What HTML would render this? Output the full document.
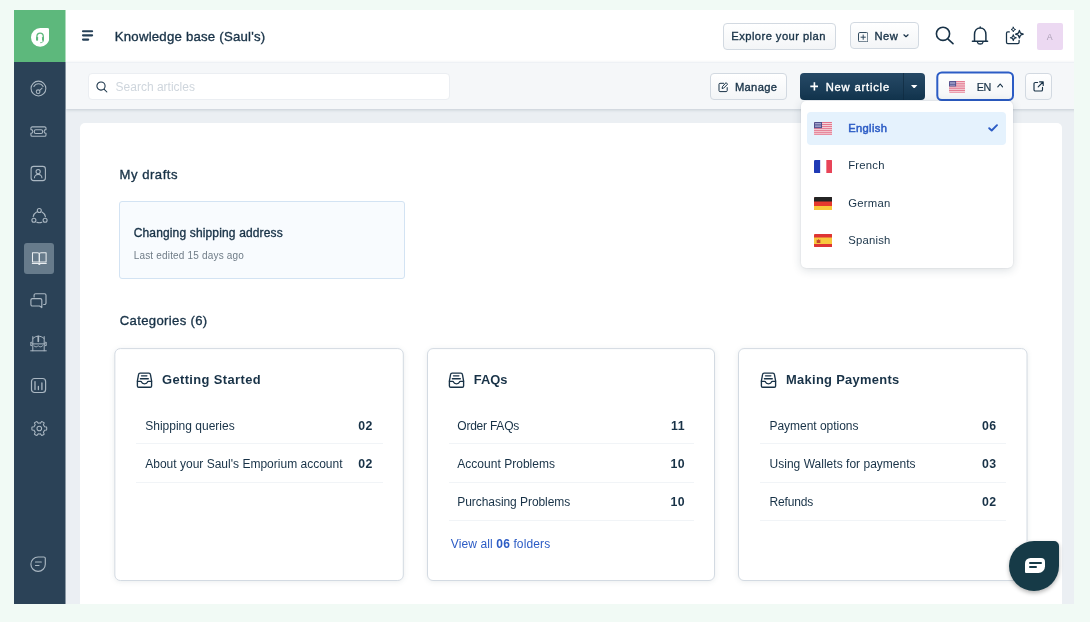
<!DOCTYPE html>
<html lang="en">
<head>
<meta charset="utf-8">
<title>Knowledge base (Saul's)</title>
<style>
*{box-sizing:border-box;margin:0;padding:0}
html,body{width:1090px;height:622px;overflow:hidden;background:#f1faf5}
body{font-family:"Liberation Sans",sans-serif;color:#183247;position:relative}
.app{position:absolute;left:14px;top:10px;width:1060px;height:594px;overflow:hidden;background:#ebeff3}
.in{position:absolute;left:-14px;top:-10px;width:1090px;height:622px;will-change:transform}
.abs{position:absolute}
.t{position:absolute;white-space:nowrap;line-height:1}
.m{-webkit-text-stroke:.35px currentColor}
.m2{-webkit-text-stroke:.5px currentColor}
/* sidebar */
.side{position:absolute;left:6px;top:2px;width:60px;height:612px;background:linear-gradient(to right,#2b4257 59px,rgba(43,66,87,.5) 59px)}
.logo{position:absolute;left:6px;top:2px;width:60px;height:60px;background:linear-gradient(to right,#5db87c 59px,#aedcbd 59px)}
.sic{position:absolute;left:30px;width:17px;height:17px}
.sic svg{display:block;width:17px;height:17px;overflow:visible}
.active{position:absolute;left:24px;top:243px;width:30px;height:31px;border-radius:3px;background:#677b8b}
/* header */
.header{position:absolute;left:65.5px;top:2px;width:1018.500px;height:60.200px;background:#fff}
.toolbar{position:absolute;left:65.5px;top:62.200px;width:1018.500px;height:46.800px;background:#f5f7f9;border-top:1px solid #eef1f5;box-shadow:0 1px 3px rgba(24,50,71,.18)}
.btn{position:absolute;border:1px solid #d2d9e1;border-radius:4px;background:linear-gradient(#fff,#f3f5f7)}
.panel{position:absolute;left:80px;top:123px;width:982px;height:520px;background:#fff;border-radius:5px}
.card{position:absolute;top:348px;height:232.5px;width:289px;border:1px solid #cfd7df;border-radius:7px;background:#fff;box-shadow:0 1px 2px rgba(24,50,71,.06)}
.sep{position:absolute;height:1px;background:#f1f4f7}
.row{font-size:12px;color:#183247}
.num{font-size:12.3px;font-weight:bold;color:#183247}
.ct{font-size:12.9px;font-weight:bold;color:#183247}
</style>
</head>
<body>
<div class="app"><div class="in">
<svg width="0" height="0" style="position:absolute"><defs>
<g id="us"><clipPath id="fc"><rect width="18" height="13" rx="1.3"/></clipPath><g clip-path="url(#fc)"><rect width="18" height="13" fill="#f5d9df"/><g fill="#e3728a"><rect y="0" width="18" height="1"/><rect y="2" width="18" height="1"/><rect y="4" width="18" height="1"/><rect y="6" width="18" height="1"/><rect y="8" width="18" height="1"/><rect y="10" width="18" height="1"/><rect y="12" width="18" height="1"/></g><rect width="7.800" height="6" fill="#4f4f8c"/><g fill="#b9b8dc"><rect x="1" y="1" width="5.800" height=".8"/><rect x="1" y="2.600" width="5.800" height=".8"/><rect x="1" y="4.200" width="5.800" height=".8"/></g></g></g>
<g id="inbox" fill="none" stroke="#183247" stroke-width="1.35" stroke-linejoin="round" stroke-linecap="round"><path d="M4.100 1.100H12.900Q14.200 1.100 14.400 2.400L15.600 8.800V13.900Q15.600 15.200 14.300 15.200H2.700Q1.400 15.200 1.400 13.900V8.800L2.600 2.400Q2.800 1.100 4.100 1.100Z"/><path d="M1.500 9.400H4.500Q5.400 9.400 5.600 10.200Q6 11.800 8.500 11.800Q11 11.800 11.400 10.200Q11.600 9.400 12.500 9.400H15.500"/><path d="M5.500 3.850H10.900M4.400 6.700H12.300"/></g>
<g id="fr" clip-path="url(#fc)"><rect width="18" height="13" fill="#fff"/><path d="M0 0h6v13H0z" fill="#1f3ab5"/><path d="M12 0h6v13h-6z" fill="#e84458"/></g>
<g id="de" clip-path="url(#fc)"><rect width="18" height="13" fill="#e6392e"/><path d="M0 0h18v4.300H0z" fill="#242424"/><path d="M0 8.700h18V13H0z" fill="#f9c93b"/></g>
<g id="es" clip-path="url(#fc)"><rect width="18" height="13" fill="#f8c83e"/><path d="M0 0h18v3.300H0z" fill="#de3434"/><path d="M0 9.700h18V13H0z" fill="#de3434"/><path d="M2.600 5.400l0.900 0.600 0.900-1 0.900 1 0.900-0.600v3.300H2.600z" fill="#c4452c"/></g>
</defs></svg>

<!-- MAIN BACKGROUND PANEL -->
<div class="panel"></div>
<!-- My drafts -->
<div class="t m" id="drafts" style="left:119.5px;top:168px;color:#183247;font-size:13.1px;letter-spacing:0.52px">My drafts</div>
<div class="abs" style="left:119px;top:201px;width:286px;height:77.500px;border:1px solid #d3e3f3;border-radius:3px;background:#f8fbfe"></div>
<div class="t m" id="dtitle" style="left:133.7px;top:227px;color:#183247;font-size:12px;letter-spacing:0.15px">Changing shipping address</div>
<div class="t" id="dsub" style="left:133.7px;top:251px;color:#6f7c87;font-size:10px;letter-spacing:0.18px">Last edited 15 days ago</div>

<div class="t m" id="cats" style="left:119.8px;top:313.8px;color:#183247;font-size:13.1px;letter-spacing:0.34px">Categories (6)</div>

<svg class="abs" style="left:0;top:0;filter:drop-shadow(0 1.5px 2.5px rgba(24,50,71,.09))" width="1090" height="622" viewBox="0 0 1090 622" fill="#fff" stroke="#d3dae2" stroke-width="1"><rect x="114.85" y="348.6" width="288.45" height="231.9" rx="5.500"/><rect x="427.500" y="348.6" width="287" height="231.9" rx="5.500"/><rect x="738.500" y="348.6" width="288.500" height="231.9" rx="5.500"/></svg>
<!-- card 1 -->
<svg class="abs" style="left:136px;top:372px" width="17" height="16" viewBox="0 0 17 16"><use href="#inbox"/></svg>
<div class="t ct" id="c1" style="left:162px;top:374px;letter-spacing:0.39px">Getting Started</div>
<div class="t row" id="c1r1" style="left:145.2px;top:420px;letter-spacing:0.01px">Shipping queries</div>
<div class="t num" id="c1n1" style="right:717.2px;top:420px;letter-spacing:0.5px">02</div>
<div class="sep" style="left:136px;top:443.200px;width:246.500px"></div>
<div class="t row" id="c1r2" style="left:145.2px;top:458px;letter-spacing:0.01px">About your Saul's Emporium account</div>
<div class="t num" id="c1n2" style="right:717.2px;top:458px;letter-spacing:0.5px">02</div>
<div class="sep" style="left:136px;top:481.500px;width:246.500px"></div>

<!-- card 2 -->
<svg class="abs" style="left:448.200px;top:372px" width="17" height="16" viewBox="0 0 17 16"><use href="#inbox"/></svg>
<div class="t ct" id="c2" style="left:473.8px;top:374px;letter-spacing:-0.04px">FAQs</div>
<div class="t row" id="c2r1" style="left:457.3px;top:420px;letter-spacing:-0.23px">Order FAQs</div>
<div class="t num" id="c2n1" style="right:404.9px;top:420px;letter-spacing:0.5px">11</div>
<div class="sep" style="left:448.500px;top:443.200px;width:245.500px"></div>
<div class="t row" id="c2r2" style="left:457.3px;top:458px;letter-spacing:0.02px">Account Problems</div>
<div class="t num" id="c2n2" style="right:404.9px;top:458px;letter-spacing:0.5px">10</div>
<div class="sep" style="left:448.500px;top:481.500px;width:245.500px"></div>
<div class="t row" id="c2r3" style="left:457.3px;top:496px;letter-spacing:-0.06px">Purchasing Problems</div>
<div class="t num" id="c2n3" style="right:404.9px;top:496px;letter-spacing:0.5px">10</div>
<div class="sep" style="left:448.500px;top:519.800px;width:245.500px"></div>
<div class="t" id="view" style="left:450.8px;top:537.600px;color:#2c5cc5;font-size:12px;letter-spacing:0.12px">View all <b>06</b> folders</div>

<!-- card 3 -->
<svg class="abs" style="left:759.600px;top:372px" width="17" height="16" viewBox="0 0 17 16"><use href="#inbox"/></svg>
<div class="t ct" id="c3" style="left:786px;top:374px;letter-spacing:0.31px">Making Payments</div>
<div class="t row" id="c3r1" style="left:769.5px;top:420px;letter-spacing:-0.03px">Payment options</div>
<div class="t num" id="c3n1" style="right:93.3px;top:420px;letter-spacing:0.5px">06</div>
<div class="sep" style="left:760px;top:443.200px;width:246px"></div>
<div class="t row" id="c3r2" style="left:769.5px;top:458px;letter-spacing:0.02px">Using Wallets for payments</div>
<div class="t num" id="c3n2" style="right:93.3px;top:458px;letter-spacing:0.5px">03</div>
<div class="sep" style="left:760px;top:481.500px;width:246px"></div>
<div class="t row" id="c3r3" style="left:769.5px;top:496px;letter-spacing:-0.17px">Refunds</div>
<div class="t num" id="c3n3" style="right:93.3px;top:496px;letter-spacing:0.5px">02</div>
<div class="sep" style="left:760px;top:519.800px;width:246px"></div>

<!-- chat fab -->
<div class="abs" style="left:1009px;top:541px;width:50px;height:49.6px;border-radius:25px 5px 25px 25px;background:#163a47;box-shadow:0 2px 4px rgba(0,0,0,.3)"></div>
<div class="abs" style="left:1025.3px;top:558px;width:19.5px;height:14.500px;border-radius:5.500px 4px 6.500px 1px;background:#fff"></div>
<div class="abs" style="left:1028.600px;top:562px;width:13px;height:2px;border-radius:1px;background:#163a47"></div>
<div class="abs" style="left:1028.600px;top:566px;width:8.600px;height:2px;border-radius:1px;background:#163a47"></div>

<!-- HEADER -->
<div class="header"></div>
<!-- hamburger -->
<svg class="abs" style="left:80px;top:28px" width="16" height="14" viewBox="0 0 16 14" fill="none" stroke="#264057" stroke-width="2.150" stroke-linecap="round"><path d="M3 3.200H12.100M3 7.350H12.100M3 11.600H8.200"/></svg>
<div id="title" class="t m" style="left:114.8px;top:30px;color:#183247;font-size:13.2px;letter-spacing:0.22px">Knowledge base (Saul's)</div>

<div class="btn" style="left:722.900px;top:22.800px;width:113.200px;height:27.200px"></div>
<div class="t m" id="explore" style="left:731.3px;top:30.6px;color:#183247;font-size:11.2px;letter-spacing:0.44px">Explore your plan</div>

<div class="btn" style="left:849.900px;top:21.900px;width:69.200px;height:27.200px"></div>
<svg class="abs" style="left:858px;top:31.700px" width="10.4" height="10.4" viewBox="0 0 10 10" fill="none" stroke="#2e475b" stroke-width="0.950"><rect x="0.5" y="0.5" width="9" height="9" rx="1.3"/><path d="M5 2.500v5M2.500 5h5"/></svg>
<div class="t m" id="newb" style="left:874.6px;top:31px;color:#183247;font-size:11.2px;letter-spacing:0.44px">New</div>
<svg class="abs" style="left:903px;top:34.200px" width="6.2" height="4" viewBox="0 0 6.2 4" fill="none" stroke="#183247" stroke-width="1.250" stroke-linecap="round" stroke-linejoin="round"><path d="M0.900 0.800L3 2.700L5.100 0.800"/></svg>

<!-- search -->
<svg class="abs" style="left:934.700px;top:25.500px" width="20" height="19" viewBox="0 0 20 19" fill="none" stroke="#183247" stroke-width="1.6" stroke-linecap="round"><circle cx="8" cy="7.8" r="6.6"/><path d="M12.8 12.8L18 17.6"/></svg>
<!-- bell -->
<svg class="abs" style="left:971px;top:26px" width="18" height="20" viewBox="0 0 18 20" fill="none" stroke="#183247" stroke-width="1.5" stroke-linecap="round" stroke-linejoin="round"><path d="M1.400 15.200H16.600M3.500 15V8.700C3.500 4.700 5.900 2 9.200 2s5.700 2.700 5.700 6.700V15M9.200 0.900V1.800"/><path d="M6.500 16.300c0.500 2.300 4.900 2.300 5.400 0" stroke-width="1.300"/></svg>
<!-- sparkle -->
<svg class="abs" style="left:1005px;top:26px" width="20" height="19" viewBox="0 0 20 19" fill="none" stroke="#183247" stroke-width="1.250" stroke-linecap="round" stroke-linejoin="round"><path d="M4.300 5.900H2.800a1.300 1.300 0 0 0-1.300 1.300V16.200a1.300 1.300 0 0 0 1.300 1.300H12.800a1.300 1.300 0 0 0 1.300-1.300V14.300"/><path d="M8.30 1.20L8.94 2.86L10.60 3.50L8.94 4.14L8.30 5.80L7.66 4.14L6.00 3.50L7.66 2.86Z" stroke-width="1"/><path d="M14.40 4.40L15.46 7.14L18.20 8.20L15.46 9.26L14.40 12.00L13.34 9.26L10.60 8.20L13.34 7.14Z"/><path d="M8.30 8.80L9.11 10.89L11.20 11.70L9.11 12.51L8.30 14.60L7.49 12.51L5.40 11.70L7.49 10.89Z" stroke-width="1.100"/></svg>
<!-- avatar -->
<div class="abs" style="left:1036.6px;top:22.8px;width:26.4px;height:26.8px;border-radius:2px;background:#ecd9f2"></div>
<div class="t" id="av" style="left:1046.800px;top:32.600px;font-size:8.800px;color:#ab9fb6">A</div>
<div class="toolbar"></div>
<!-- search input -->
<div class="abs" style="left:88px;top:73px;width:362px;height:27px;border:1px solid #ebeef2;border-radius:4px;background:#fff"></div>
<svg class="abs" style="left:95.6px;top:80.8px" width="12" height="12" viewBox="0 0 12 12" fill="none" stroke="#183247" stroke-width="1.05" stroke-linecap="round"><circle cx="5" cy="5" r="4.1"/><path d="M8 8.100L10.900 11"/></svg>
<div class="t" id="search" style="left:115.6px;top:81.100px;color:#cfd6dd;font-size:12px;letter-spacing:-0.00px">Search articles</div>

<!-- manage -->
<div class="btn" style="left:710px;top:73px;width:77px;height:27px"></div>
<svg class="abs" style="left:717.5px;top:82px" width="10.5" height="10.5" viewBox="0 0 10.5 10.5" fill="none" stroke="#183247" stroke-width="1" stroke-linecap="round" stroke-linejoin="round"><path d="M5.600 1.300H2a1 1 0 0 0-1 1V8.600a1 1 0 0 0 1 1H8.200a1 1 0 0 0 1-1V5.600"/><path d="M8.300 0.900l1.300 1.300L5.600 6.200 4.100 6.500 4.400 5z"/></svg>
<div class="t m" id="manage" style="left:734.9px;top:81.600px;color:#183247;font-size:11.2px;letter-spacing:0.34px">Manage</div>

<!-- new article -->
<div class="abs" style="left:800px;top:73px;width:125px;height:26.6px;border-radius:4px;background:linear-gradient(#264966,#12344d)"></div>
<div class="abs" style="left:903px;top:73px;width:1px;height:26.6px;background:#0f2b40;opacity:.7"></div>
<svg class="abs" style="left:809.6px;top:82px" width="8.8" height="8.8" viewBox="0 0 8.8 8.800" fill="none" stroke="#fff" stroke-width="1.6"><path d="M4.400 0.300v8.200M0.300 4.400h8.200"/></svg>
<div class="t m" id="newart" style="left:825.7px;top:82px;color:#fff;font-size:11.2px;letter-spacing:0.81px">New article</div>
<svg class="abs" style="left:911.4px;top:84.8px" width="6.4" height="3.6" viewBox="0 0 6.400 3.600" fill="#fff"><path d="M0 0h6.400L3.200 3.600z"/></svg>

<!-- EN button -->
<svg class="abs" style="left:930px;top:66px" width="90" height="40" viewBox="0 0 90 40"><defs><linearGradient id="bg1" x1="0" y1="0" x2="0" y2="1"><stop offset="0" stop-color="#fff"/><stop offset="1" stop-color="#f3f5f7"/></linearGradient></defs><rect x="7.300" y="6.500" width="75.700" height="27.600" rx="4.500" fill="url(#bg1)" stroke="#2c5cc5" stroke-width="2"/></svg>
<svg class="abs" style="left:948.800px;top:81.100px" width="16.400" height="11.800" viewBox="0 0 18 13" preserveAspectRatio="none"><use href="#us"/></svg>
<div class="t" id="en" style="left:976.7px;top:82px;color:#183247;-webkit-text-stroke:.2px currentColor;font-size:10.8px;letter-spacing:-0.35px">EN</div>
<svg class="abs" style="left:996.900px;top:82.500px" width="6.400" height="5" viewBox="0 0 6.400 5" fill="none" stroke="#183247" stroke-width="1.150" stroke-linecap="round" stroke-linejoin="round"><path d="M0.800 3.900L3.200 1 5.600 3.900"/></svg>

<!-- external link -->
<div class="btn" style="left:1025px;top:73px;width:27px;height:27px"></div>
<svg class="abs" style="left:1033px;top:81.2px" width="11" height="11" viewBox="0 0 11 11" fill="none" stroke="#183247" stroke-width="1.15" stroke-linecap="round" stroke-linejoin="round"><path d="M4.600 1.500H2.300a1.300 1.300 0 0 0-1.300 1.300V8.700A1.300 1.300 0 0 0 2.300 10H8.200a1.300 1.300 0 0 0 1.300-1.300V6.400"/><path d="M6.600 0.800h3.600v3.600M10 1L5.200 5.800"/></svg>


<!-- language dropdown -->
<div class="abs" style="left:801px;top:101px;width:211.500px;height:167px;border-radius:5px;background:#fff;box-shadow:0 2px 10px rgba(24,50,71,.16),0 0 2px rgba(24,50,71,.12)"></div>
<div class="abs" style="left:807.4px;top:112.2px;width:198.800px;height:33px;border-radius:4px;background:#e5f2fd"></div>
<svg class="abs" style="left:813.8px;top:122.200px" width="18.5" height="13.3" viewBox="0 0 18 13" preserveAspectRatio="none"><use href="#us"/></svg>
<div class="t m2" id="l1" style="left:848.2px;top:123px;color:#2c5cc5;font-size:11.2px;letter-spacing:0.34px">English</div>
<svg class="abs" style="left:987.600px;top:124px" width="10.200" height="7.800" viewBox="0 0 10.200 7.800" fill="none" stroke="#2c5cc5" stroke-width="1.9" stroke-linecap="round" stroke-linejoin="round"><path d="M1.200 4.200L3.700 6.500 9 1.200"/></svg>
<svg class="abs" style="left:813.8px;top:159.500px" width="18.5" height="13.3" viewBox="0 0 18 13" preserveAspectRatio="none"><use href="#fr"/></svg>
<div class="t" id="l2" style="left:848.2px;top:159.600px;color:#183247;font-size:11.3px;letter-spacing:0.22px">French</div>
<svg class="abs" style="left:813.8px;top:196.900px" width="18.5" height="13.3" viewBox="0 0 18 13" preserveAspectRatio="none"><use href="#de"/></svg>
<div class="t" id="l3" style="left:848.2px;top:198px;color:#183247;font-size:11.3px;letter-spacing:0.25px">German</div>
<svg class="abs" style="left:813.8px;top:234.200px" width="18.5" height="13.3" viewBox="0 0 18 13" preserveAspectRatio="none"><use href="#es"/></svg>
<div class="t" id="l4" style="left:848.2px;top:235px;color:#183247;font-size:11.3px;letter-spacing:0.21px">Spanish</div>

<!-- SIDEBAR -->
<div class="side"></div>
<div class="logo"></div>
<!-- logo mark -->
<svg class="abs" style="left:30.700px;top:27.800px" width="18.400" height="18.800" viewBox="0 0 18.400 18.800"><path d="M9.400 0H16.400a2 2 0 0 1 2 2V9.400a9.200 9.400 0 1 1-9-9.400z" fill="#fff"/><g fill="none" stroke="#5db87c" stroke-width="1.500" stroke-linecap="round"><path d="M5.900 11.500V8.400a3.200 3.200 0 0 1 6.400 0V11.500" stroke-width="1.300"/><path d="M12.300 12.600c0 1.500-1.200 2.100-2.600 2.100" stroke-width="1"/></g><rect x="5.100" y="8.900" width="2" height="3.900" rx=".7" fill="#5db87c"/><rect x="11" y="8.900" width="2" height="3.900" rx=".7" fill="#5db87c"/></svg>

<!-- gauge -->
<svg class="abs" style="left:30.400px;top:80px" width="17" height="17" viewBox="0 0 17 17" fill="none" stroke="#aab7c2" stroke-width="1.050" stroke-linecap="round"><circle cx="8.450" cy="8.500" r="7.400"/><path d="M3.900 6.500A5.300 5.300 0 0 1 13.100 6.500"/><path d="M12.100 8.050L9.500 10.600"/><circle cx="8.100" cy="11.700" r="1.850"/></svg>
<!-- ticket -->
<svg class="abs" style="left:30.400px;top:122.750px" width="17" height="17" viewBox="0 0 17 17" fill="none" stroke="#aab7c2" stroke-width="1.100" stroke-linejoin="round"><path d="M2.200 3.900H14.700a1.300 1.300 0 0 1 1.300 1.300V6.600a1.900 1.900 0 0 0 0 3.800v1.500a1.300 1.300 0 0 1-1.300 1.300H2.200a1.300 1.300 0 0 1-1.300-1.300V10.400a1.900 1.900 0 0 0 0-3.800V5.200a1.300 1.300 0 0 1 1.300-1.300z"/><rect x="4.300" y="6.700" width="8.300" height="3.800" rx="1.500"/></svg>
<!-- contact -->
<svg class="abs" style="left:30.400px;top:164.900px" width="17" height="17" viewBox="0 0 17 17" fill="none" stroke="#aab7c2" stroke-width="1.100" stroke-linecap="round"><rect x="1.100" y="1.400" width="14.300" height="14.200" rx="2.600"/><circle cx="8.150" cy="6.600" r="2.100"/><path d="M4.500 12.800a3.700 3.400 0 0 1 7.400 0"/></svg>
<!-- network -->
<svg class="abs" style="left:30.500px;top:207.300px" width="17" height="17" viewBox="0 0 17 17" fill="none" stroke="#aab7c2" stroke-width="1.100" stroke-linecap="round"><circle cx="8.300" cy="3.500" r="2"/><circle cx="2.900" cy="13.300" r="2"/><circle cx="14.100" cy="13.300" r="2"/><path d="M2.200 9.600A6.900 6.900 0 0 1 5.600 5M11 5A6.900 6.900 0 0 1 14.400 9.600M5.800 15.300A6.900 6.900 0 0 0 10.800 15.300"/></svg>
<!-- active: solutions -->
<div class="active"></div>
<svg class="abs" style="left:30.500px;top:249.700px" width="17" height="17" viewBox="0 0 17 17" fill="none" stroke="#e9edf0" stroke-width="1.050" stroke-linejoin="round"><path d="M1.500 2.700H6.500a1.800 1.800 0 0 1 1.800 1.800V12H1.500z"/><path d="M15.100 2.700H10.100a1.800 1.800 0 0 0-1.800 1.800V12H15.100z"/><path d="M1.300 13.500H15.300M7.500 13.800L8.300 14.500 9.100 13.800" stroke-linecap="round"/></svg>
<!-- chats -->
<svg class="abs" style="left:30.400px;top:292px" width="17" height="17" viewBox="0 0 17 17" fill="none" stroke="#aab7c2" stroke-width="1.150" stroke-linecap="round" stroke-linejoin="round"><path d="M4.100 5V3.200a1.500 1.500 0 0 1 1.500-1.500H14.500a1.500 1.500 0 0 1 1.500 1.500V11a1.500 1.500 0 0 1-1.500 1.500H13.700"/><path d="M2.400 6.600H10.300a1.500 1.500 0 0 1 1.500 1.500V15.600L9.600 14H2.400a1.500 1.500 0 0 1-1.500-1.500V8.100a1.500 1.500 0 0 1 1.500-1.500z"/></svg>
<!-- field service -->
<svg class="abs" style="left:30.400px;top:334.700px" width="17" height="17" viewBox="0 0 17 17" fill="none" stroke="#aab7c2" stroke-width="1" stroke-linecap="round" stroke-linejoin="round"><path d="M2.800 1.600V15.800M14.200 1.600V15.800M0.700 15.800H16.300M1.200 8.900H15.800"/><path d="M2.800 3.600C4.800 1.700 6.500 1.200 8.300 1.200s3.900 0.500 5.900 2.400"/><path d="M8.300 1.300V6.300" stroke-width="1.700"/><path d="M1.800 7.100a1.800 1.800 0 0 0 0 3.700M15.200 7.100a1.800 1.800 0 0 1 0 3.700"/><path d="M4 10.800c1 1.300 2.800 1.300 3.500 0.500 0.500-0.500 1.100-0.500 1.600 0 0.700 0.800 2.500 0.800 3.500-0.500"/></svg>
<!-- reports -->
<svg class="abs" style="left:30.400px;top:377.100px" width="17" height="17" viewBox="0 0 17 17" fill="none" stroke="#aab7c2" stroke-width="1.200" stroke-linecap="round"><rect x="1.500" y="1.500" width="14.100" height="14" rx="3"/><path d="M5 4.600V12.500M8.400 9.400V12.500M11.900 6V12.500" stroke-width="1.300"/></svg>
<!-- admin gear -->
<svg class="abs" style="left:30.500px;top:419.600px" width="17" height="17" viewBox="0 0 17 17" fill="none" stroke="#aab7c2" stroke-width="1.050" stroke-linejoin="round"><path d="M13.53 6.80L15.60 7.03A7.45 7.45 0 0 1 15.60 9.97L13.53 10.20A5.50 5.50 0 0 1 12.39 12.18L13.23 14.09A7.45 7.45 0 0 1 10.68 15.56L9.44 13.88A5.50 5.50 0 0 1 7.16 13.88L5.92 15.56A7.45 7.45 0 0 1 3.37 14.09L4.21 12.18A5.50 5.50 0 0 1 3.07 10.20L1.00 9.97A7.45 7.45 0 0 1 1.00 7.03L3.07 6.80A5.50 5.50 0 0 1 4.21 4.82L3.37 2.91A7.45 7.45 0 0 1 5.92 1.44L7.16 3.12A5.50 5.50 0 0 1 9.44 3.12L10.68 1.44A7.45 7.45 0 0 1 13.23 2.91L12.39 4.82A5.50 5.50 0 0 1 13.53 6.80Z"/><circle cx="8.300" cy="8.500" r="2.300"/></svg>
<!-- freshchat -->
<svg class="abs" style="left:29.700px;top:556.100px" width="17" height="17" viewBox="0 0 17 17" fill="none" stroke="#aab7c2" stroke-width="1.150" stroke-linecap="round"><path d="M8.100 0.950H13.900a1.400 1.400 0 0 1 1.400 1.400V8.150a7.200 7.200 0 1 1-7.200-7.200z"/><path d="M5.500 6H11.300M5.500 9.500H9" stroke-width="1.200"/></svg>

</div></div>
</body>
</html>
